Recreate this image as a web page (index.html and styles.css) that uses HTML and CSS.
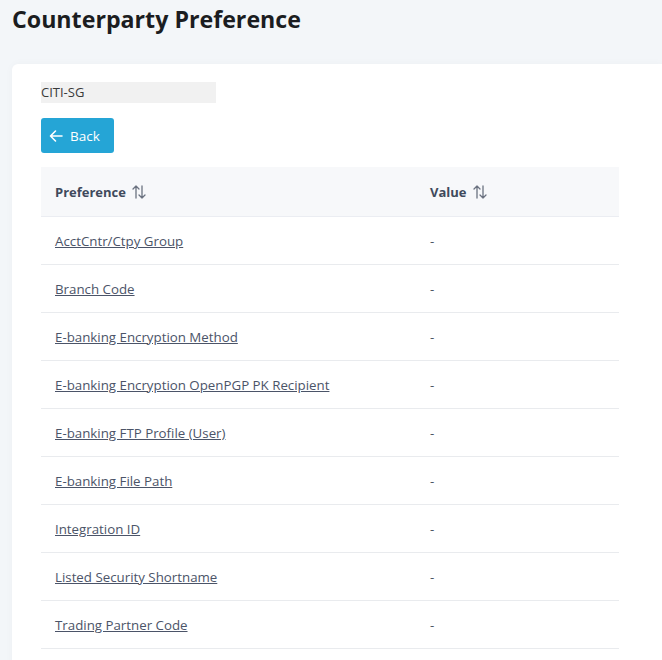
FILE: index.html
```html
<!DOCTYPE html>
<html lang="en">

<head>
    <meta charset="UTF-8">
    <title>Counterparty Preference</title>
    <link rel="stylesheet" href="styles.css">
</head>

<body>
    <div class="page">
        <h1 class="title">Counterparty Preference</h1>

        <div class="card">
            <div class="name-field">CITI-SG</div>

            <button class="btn-back" type="button">
                <svg width="14" height="14" viewBox="0 0 14 14" fill="none" stroke="#fff" stroke-width="1.6" stroke-linecap="round" stroke-linejoin="round">
                    <path d="M13 7H1.5M6.5 2L1.5 7l5 5"/>
                </svg>
                <span>Back</span>
            </button>

            <table class="pref-table">
                <thead>
                    <tr>
                        <th class="col-pref">Preference <span class="sort-icon"><svg width="16" height="16" viewBox="0 0 16 16" fill="none" stroke="#6b7280" stroke-width="1.3" stroke-linecap="round" stroke-linejoin="round"><path d="M5 14V2M2 5l3-3 3 3M11 2v12M8 11l3 3 3-3"/></svg></span></th>
                        <th>Value <span class="sort-icon"><svg width="16" height="16" viewBox="0 0 16 16" fill="none" stroke="#6b7280" stroke-width="1.3" stroke-linecap="round" stroke-linejoin="round"><path d="M5 14V2M2 5l3-3 3 3M11 2v12M8 11l3 3 3-3"/></svg></span></th>
                    </tr>
                </thead>
                <tbody>
                    <tr><td><a href="#">AcctCntr/Ctpy Group</a></td><td>-</td></tr>
                    <tr><td><a href="#">Branch Code</a></td><td>-</td></tr>
                    <tr><td><a href="#">E-banking Encryption Method</a></td><td>-</td></tr>
                    <tr><td><a href="#">E-banking Encryption OpenPGP PK Recipient</a></td><td>-</td></tr>
                    <tr><td><a href="#">E-banking FTP Profile (User)</a></td><td>-</td></tr>
                    <tr><td><a href="#">E-banking File Path</a></td><td>-</td></tr>
                    <tr><td><a href="#">Integration ID</a></td><td>-</td></tr>
                    <tr><td><a href="#">Listed Security Shortname</a></td><td>-</td></tr>
                    <tr><td><a href="#">Trading Partner Code</a></td><td>-</td></tr>
                </tbody>
            </table>
        </div>
    </div>
</body>

</html>
```

FILE: styles.css
```css
html,
body {
    margin: 0;
    padding: 0;
    background: #f3f6f9;
    overflow: hidden;
}

body {
    font-family: "Open Sans", "Noto Sans", sans-serif;
    color: #212529;
}

.page {
    padding: 0 0 0 12px;
}

.title {
    margin: 0;
    padding-top: 1px;
    height: 63px;
    font-size: 23.2px;
    font-weight: 700;
    line-height: 36px;
    color: #1b1d21;
}

.card {
    background: #fff;
    border-radius: 6px 0 0 0;
    padding: 18px 29px 40px;
    box-shadow: 0 0 8px rgba(0, 0, 0, 0.03);
}

.name-field {
    width: 175px;
    height: 21px;
    line-height: 21px;
    background: #f1f1f1;
    font-size: 13px;
    color: #3a3a3a;
}

.btn-back {
    display: flex;
    align-items: center;
    gap: 7px;
    margin-top: 15px;
    height: 35px;
    width: 73px;
    padding: 0 0 0 8px;
    border: none;
    border-radius: 3px;
    background: #25a5d6;
    color: #fff;
    font-family: inherit;
    font-size: 13.5px;
}

.pref-table {
    margin-top: 14px;
    width: 578px;
    border-collapse: collapse;
    font-size: 13.3px;
}

.pref-table th {
    background: #f7f8fa;
    height: 45px;
    padding: 4px 14px 0;
    text-align: left;
    font-weight: 700;
    font-size: 13px;
    color: #3f4a5c;
    border-bottom: 1px solid #ebedf2;
}

.pref-table .col-pref {
    width: 347px;
}

.sort-icon {
    display: inline-block;
    vertical-align: -3px;
    margin-left: 2px;
}

.pref-table td {
    height: 46px;
    padding: 1px 14px 0;
    border-bottom: 1px solid #e9ebee;
    color: #4b5563;
}

.pref-table td a {
    color: #4b5468;
    text-decoration: underline;
}
```
